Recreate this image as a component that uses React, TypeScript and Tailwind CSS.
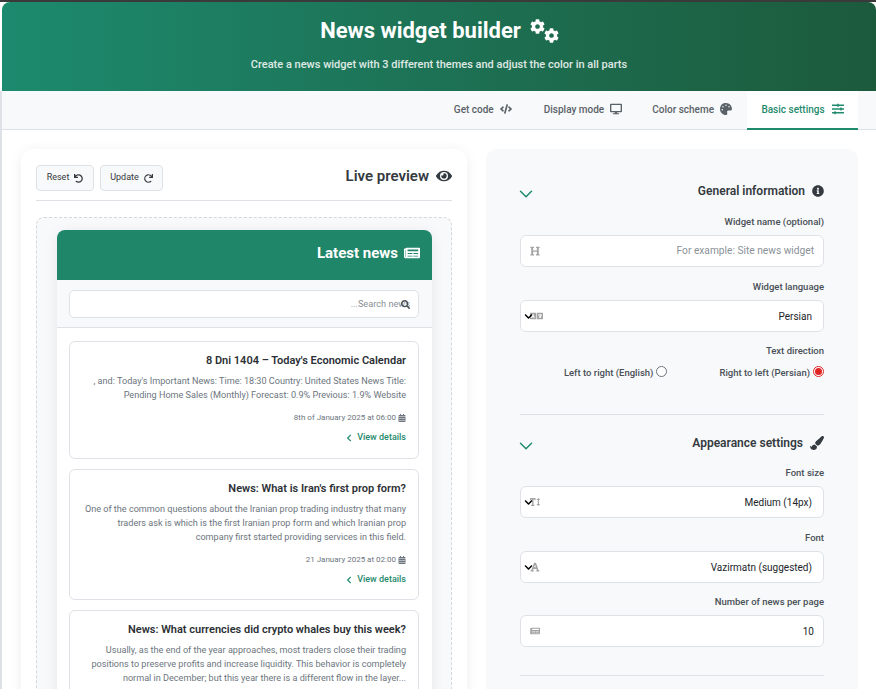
import React from "react";
import {
  FaCog, FaCode, FaDesktop, FaPalette, FaSlidersH, FaUndo, FaRedo, FaEye,
  FaSearch, FaCalendarAlt, FaChevronLeft, FaChevronDown, FaInfoCircle, FaPaintBrush,
  FaHeading, FaLanguage, FaTextHeight, FaFont, FaNewspaper,
} from "react-icons/fa";
import { ChevronDown } from "lucide-react";

const news = [
  {
    title: "8 Dni 1404 – Today's Economic Calendar",
    body: [", and: Today's Important News: Time: 18:30 Country: United States News Title:", "Pending Home Sales (Monthly) Forecast: 0.9% Previous: 1.9% Website"],
    date: "8th of January 2025 at 06:00",
    h: "h-[118px]",
  },
  {
    title: "News: What is Iran's first prop form?",
    body: ["One of the common questions about the Iranian prop trading industry that many", "traders ask is which is the first Iranian prop form and which Iranian prop", "company first started providing services in this field."],
    date: "21 January 2025 at 02:00",
    h: "h-[131px]",
  },
  {
    title: "News: What currencies did crypto whales buy this week?",
    body: ["Usually, as the end of the year approaches, most traders close their trading", "positions to preserve profits and increase liquidity. This behavior is completely", "normal in December; but this year there is a different flow in the layer..."],
    date: "",
    h: "h-[132px]",
  },
];

function Tab({ label, icon, active, wide }: { label: string; icon: React.ReactNode; active?: boolean; wide?: boolean }) {
  if (active) {
    return (
      <div className="flex h-[39px] w-[111px] items-center justify-center gap-[7px] border-b-2 border-[#1f8a6d] bg-white pb-[1px] text-[#1f8a6d]">
        <span className="text-[10px] font-medium">{label}</span>
        <span className="text-[12px]">{icon}</span>
      </div>
    );
  }
  return (
    <div className={`flex h-[39px] items-center gap-[6px] pb-[3px] pl-[15px] text-[#5a6268] ${wide ? "pr-[17px]" : "pr-[15px]"}`}>
      <span className="text-[10px] font-medium">{label}</span>
      <span className="text-[12px]">{icon}</span>
    </div>
  );
}

function Label({ children }: { children: React.ReactNode }) {
  return <div className="text-right text-[9.5px] leading-[14px] font-medium text-[#495057]">{children}</div>;
}

function Box({ icon, value, placeholder, select }: { icon: React.ReactNode; value?: string; placeholder?: string; select?: boolean }) {
  return (
    <div className={`relative flex h-[32px] items-center justify-end rounded-[6px] border border-[#dee2e6] bg-white pl-[9px] ${select ? "pr-[11px]" : "pr-[9px]"}`}>
      <span className="absolute top-1/2 left-[9px] -translate-y-1/2 text-[10px] text-[#a3a3a3]">{icon}</span>
      {select && <FaChevronDown className="absolute top-[11px] left-[3px] text-[9px] text-black" />}
      <span className={placeholder ? "text-[10.2px] text-[#8a9197]" : "text-[10px] text-[#212529]"}>
        {value || placeholder}
      </span>
    </div>
  );
}

function SectionHead({ title, icon }: { title: string; icon: React.ReactNode }) {
  return (
    <div className="flex h-[24px] items-center justify-between">
      <ChevronDown size={22} strokeWidth={1.6} className="mt-[5px] -ml-[5px] text-[#1f8a6d]" />
      <div className="flex items-center gap-[7px]">
        <span className="text-[12px] font-semibold text-[#343a40]">{title}</span>
        <span className="text-[#343a40]">{icon}</span>
      </div>
    </div>
  );
}

export default function App() {
  return (
    <div className="h-[698px] w-[876px] overflow-hidden bg-white font-['Roboto',sans-serif]">
      <div className="h-[689px] overflow-hidden">
        <div className="h-[2px] bg-[#3a3a3a]" />
        <div className="pl-[2px]">
          <div className="flex h-[89px] flex-col items-center rounded-tl-lg rounded-tr-lg bg-gradient-to-r from-[#1c8a6e] to-[#1c5a3c] text-white">
            <div className="mt-[14px] flex items-center gap-[9px]">
              <h1 className="text-[22px] leading-[30px] font-bold">News widget builder</h1>
              <span className="relative block h-[24px] w-[28px]">
                <FaCog className="absolute top-[0px] left-0 text-[15px]" />
                <FaCog className="absolute top-[9px] left-[14px] text-[15px]" />
              </span>
            </div>
            <p className="mt-[12px] text-[11px] leading-[14px] font-medium text-white/85">
              Create a news widget with 3 different themes and adjust the color in all parts
            </p>
          </div>
        </div>

        <div className="h-[598px] border-l-2 border-[#dee2e6]">
          <div className="flex h-[39px] justify-end border-b border-[#dee2e6] bg-[#f8f9fa] pr-[18px]">
            <Tab label="Get code" icon={<FaCode />} wide />
            <Tab label="Display mode" icon={<FaDesktop />} />
            <Tab label="Color scheme" icon={<FaPalette />} />
            <Tab label="Basic settings" icon={<FaSlidersH />} active />
          </div>

          <div className="flex gap-[19px] pt-[19px] pl-[19px]">
            {/* preview card */}
            <div className="h-[560px] w-[446px] rounded-t-[12px] bg-white px-[15px] pt-[16px] shadow-[0_2px_14px_rgba(0,0,0,0.07)]">
              <div className="flex h-[36px] items-start justify-between border-b border-[#dee2e6]">
                <div className="flex gap-[6px]">
                  <button className="flex h-[26px] w-[58px] items-center justify-center gap-[5px] rounded-[4px] border border-[#dee2e6] bg-[#f8f9fa] text-[9px] text-[#343a40]">
                    Reset <FaUndo className="text-[9px]" />
                  </button>
                  <button className="flex h-[26px] w-[63px] items-center justify-center gap-[5px] rounded-[4px] border border-[#dee2e6] bg-[#f8f9fa] text-[9px] text-[#343a40]">
                    Update <FaRedo className="text-[9px]" />
                  </button>
                </div>
                <div className="flex items-center gap-[7px] text-[#343a40]">
                  <span className="text-[15px] leading-[22px] font-semibold">Live preview</span>
                  <FaEye className="text-[16px]" />
                </div>
              </div>

              <div className="mt-[16px] h-[480px] rounded-t-[8px] border border-dashed border-[#d5d9dd] bg-[#f8f9fa] pt-[12px] pr-[19px] pl-[20px]">
                <div className="h-[470px] overflow-hidden rounded-t-[8px] bg-white shadow-[0_3px_14px_rgba(0,0,0,0.08)]">
                  <div className="flex h-[50px] items-center justify-end gap-[6px] bg-[#1f866a] pr-[12px] pb-[4px] text-white">
                    <span className="text-[15px] font-bold">Latest news</span>
                    <FaNewspaper className="text-[16px]" />
                  </div>
                  <div className="border-b border-[#dee2e6] bg-[#f8f9fa] pt-[10px] pr-[13px] pb-[9px] pl-[12px]">
                    <div className="relative flex h-[28px] items-center justify-end rounded-[5px] border border-[#dee2e6] bg-white pr-[8px]">
                      <span className="text-[9.2px] whitespace-nowrap text-[#8a9197]">...Search news</span>
                      <FaSearch className="absolute top-[9px] right-[8px] text-[9px] text-[#495057]" />
                    </div>
                  </div>
                  <div className="flex flex-col gap-[10px] pt-[13px] pr-[13px] pl-[12px]">
                    {news.map((n) => (
                      <div key={n.title} className={`${n.h} shrink-0 rounded-[6px] border border-[#dee2e6] bg-white px-[12px] pt-[11px] text-right`}>
                        <h3 className="text-[11px] leading-[16px] font-semibold text-[#2b3035]">{n.title}</h3>
                        <div className="mt-[5px] text-[9.1px] leading-[14px] text-[#6c757d]">
                          {n.body.map((line) => (
                            <div key={line} className="whitespace-nowrap">{line}</div>
                          ))}
                        </div>
                        {n.date && (
                          <div className="mt-[10px] flex items-center justify-end gap-[2px] text-[8px] leading-[12px] text-[#6c757d]">
                            {n.date} <FaCalendarAlt className="text-[8px]" />
                          </div>
                        )}
                        {n.date && (
                          <div className="mt-[7px] flex items-center justify-end gap-[4px] text-[9px] leading-[13px] font-medium text-[#1f8a6d]">
                            <FaChevronLeft className="text-[8px]" /> View details
                          </div>
                        )}
                      </div>
                    ))}
                  </div>
                </div>
              </div>
            </div>

            {/* settings panel */}
            <div className="h-[560px] w-[372px] rounded-t-[10px] bg-[#f8f9fa] px-[34px] pt-[30px]">
              <SectionHead title="General information" icon={<FaInfoCircle className="text-[12px]" />} />
              <div className="mt-[12px]"><Label>Widget name (optional)</Label></div>
              <div className="mt-[6px]"><Box icon={<FaHeading />} placeholder="For example: Site news widget" /></div>
              <div className="mt-[13px]"><Label>Widget language</Label></div>
              <div className="mt-[6px]"><Box icon={<FaLanguage className="text-[13px]" />} value="Persian" select /></div>
              <div className="mt-[12px]"><Label>Text direction</Label></div>
              <div className="mt-[8px] flex justify-end gap-[52px] text-[9.5px] leading-[14px] font-medium text-[#495057]">
                <label className="flex items-center gap-[3px]">
                  Left to right (English)
                  <span className="mb-[3px] h-[11px] w-[11px] rounded-full border border-[#6c757d] bg-white" />
                </label>
                <label className="flex items-center gap-[3px]">
                  Right to left (Persian)
                  <span className="mb-[3px] flex h-[11px] w-[11px] items-center justify-center rounded-full border border-[#e02424] bg-white">
                    <span className="h-[7px] w-[7px] rounded-full bg-[#e02424]" />
                  </span>
                </label>
              </div>

              <div className="mt-[34px] border-t border-[#dee2e6]" />

              <div className="mt-[16px]">
                <SectionHead title="Appearance settings" icon={<FaPaintBrush className="text-[14px]" />} />
              </div>
              <div className="mt-[11px]"><Label>Font size</Label></div>
              <div className="mt-[6px]"><Box icon={<FaTextHeight />} value="Medium (14px)" select /></div>
              <div className="mt-[13px]"><Label>Font</Label></div>
              <div className="mt-[6px]"><Box icon={<FaFont />} value="Vazirmatn (suggested)" select /></div>
              <div className="mt-[12px]"><Label>Number of news per page</Label></div>
              <div className="mt-[6px]"><Box icon={<FaNewspaper />} value="10" /></div>

              <div className="mt-[28px] border-t border-[#dee2e6]" />
            </div>
          </div>
        </div>
      </div>
    </div>
  );
}
